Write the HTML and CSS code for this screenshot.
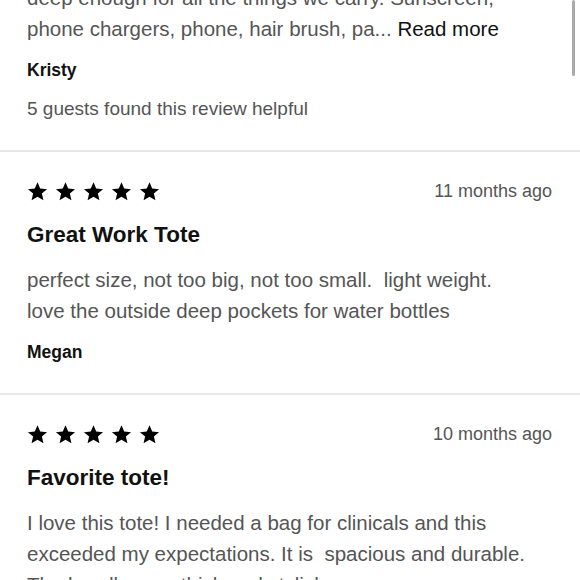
FILE: index.html
```html
<!DOCTYPE html>
<html lang="en">
<head>
    <meta charset="UTF-8">
    <meta name="viewport" content="width=device-width, initial-scale=1.0">
    <title>Guest Reviews</title>
    <link rel="stylesheet" href="styles.css">
</head>
<body>
    <!-- Scroll indicator -->
    <div class="scroll-thumb"></div>

    <div class="review-list">
        <!-- Review scrolled partly out of view -->
        <div class="review review-partial">
            <p class="review-text">deep enough for all the things we carry. Sunscreen, phone chargers, phone, hair brush, pa... <a href="#" class="read-more">Read more</a></p>
            <p class="review-author">Kristy</p>
            <p class="review-helpful">5 guests found this review helpful</p>
        </div>

        <div class="review">
            <div class="review-head">
                <div class="stars">
                    <svg viewBox="0 0 24 24"><path d="M12 1.5l3.1 7.2 7.8.6-5.9 5.1 1.8 7.6L12 17.9 5.2 22l1.8-7.6-5.9-5.1 7.8-.6z"/></svg>
                    <svg viewBox="0 0 24 24"><path d="M12 1.5l3.1 7.2 7.8.6-5.9 5.1 1.8 7.6L12 17.9 5.2 22l1.8-7.6-5.9-5.1 7.8-.6z"/></svg>
                    <svg viewBox="0 0 24 24"><path d="M12 1.5l3.1 7.2 7.8.6-5.9 5.1 1.8 7.6L12 17.9 5.2 22l1.8-7.6-5.9-5.1 7.8-.6z"/></svg>
                    <svg viewBox="0 0 24 24"><path d="M12 1.5l3.1 7.2 7.8.6-5.9 5.1 1.8 7.6L12 17.9 5.2 22l1.8-7.6-5.9-5.1 7.8-.6z"/></svg>
                    <svg viewBox="0 0 24 24"><path d="M12 1.5l3.1 7.2 7.8.6-5.9 5.1 1.8 7.6L12 17.9 5.2 22l1.8-7.6-5.9-5.1 7.8-.6z"/></svg>
                </div>
                <span class="review-date">11 months ago</span>
            </div>
            <h3 class="review-title">Great Work Tote</h3>
            <p class="review-text">perfect size, not too big, not too small.  light weight.
love the outside deep pockets for water bottles</p>
            <p class="review-author">Megan</p>
        </div>

        <div class="review">
            <div class="review-head">
                <div class="stars">
                    <svg viewBox="0 0 24 24"><path d="M12 1.5l3.1 7.2 7.8.6-5.9 5.1 1.8 7.6L12 17.9 5.2 22l1.8-7.6-5.9-5.1 7.8-.6z"/></svg>
                    <svg viewBox="0 0 24 24"><path d="M12 1.5l3.1 7.2 7.8.6-5.9 5.1 1.8 7.6L12 17.9 5.2 22l1.8-7.6-5.9-5.1 7.8-.6z"/></svg>
                    <svg viewBox="0 0 24 24"><path d="M12 1.5l3.1 7.2 7.8.6-5.9 5.1 1.8 7.6L12 17.9 5.2 22l1.8-7.6-5.9-5.1 7.8-.6z"/></svg>
                    <svg viewBox="0 0 24 24"><path d="M12 1.5l3.1 7.2 7.8.6-5.9 5.1 1.8 7.6L12 17.9 5.2 22l1.8-7.6-5.9-5.1 7.8-.6z"/></svg>
                    <svg viewBox="0 0 24 24"><path d="M12 1.5l3.1 7.2 7.8.6-5.9 5.1 1.8 7.6L12 17.9 5.2 22l1.8-7.6-5.9-5.1 7.8-.6z"/></svg>
                </div>
                <span class="review-date">10 months ago</span>
            </div>
            <h3 class="review-title">Favorite tote!</h3>
            <p class="review-text">I love this tote! I needed a bag for clinicals and this exceeded my expectations. It is  spacious and durable. The handles are thick and stylish.</p>
        </div>
    </div>
</body>
</html>
```

FILE: styles.css
```css
body {
    font-family: "Liberation Sans", Arial, sans-serif;
    background-color: #ffffff;
    color: #333;
    margin: 0;
    overflow: hidden;
}
p, h3 {
    margin: 0;
}
.review-list {
    margin-top: -18px; /* list is scrolled a little */
}
.review {
    padding: 27px 28px 29px 27px;
    border-bottom: 2px solid #e8e8e8;
}
.review-partial {
    padding-top: 0;
}
.review-head {
    display: flex;
    justify-content: space-between;
    align-items: center;
    height: 24px;
}
.stars {
    display: flex;
    gap: 7px;
}
.stars svg {
    width: 21px;
    height: 21px;
    fill: #000;
}
.review-date {
    font-size: 18px;
    color: #555;
}
.review-title {
    margin-top: 17px;
    font-size: 22.5px;
    line-height: 30px;
    font-weight: bold;
    color: #111;
}
.review-text {
    max-width: 510px;
    margin-top: 14px;
    font-size: 20.5px;
    line-height: 31px;
    color: #555;
    white-space: pre-wrap;
}
.review-partial .review-text {
    margin-top: 0;
}
.read-more {
    color: #111;
    text-decoration: none;
}
.review-author {
    margin-top: 14px;
    font-size: 17.5px;
    line-height: 24px;
    font-weight: bold;
    color: #111;
}
.review-helpful {
    margin-top: 15px;
    font-size: 19px;
    line-height: 24px;
    color: #555;
}

/* Scroll indicator on the right edge */
.scroll-thumb {
    position: absolute;
    top: 0;
    right: 5px;
    width: 3px;
    height: 76px;
    border-radius: 2px;
    background-color: #aaa;
}
```
